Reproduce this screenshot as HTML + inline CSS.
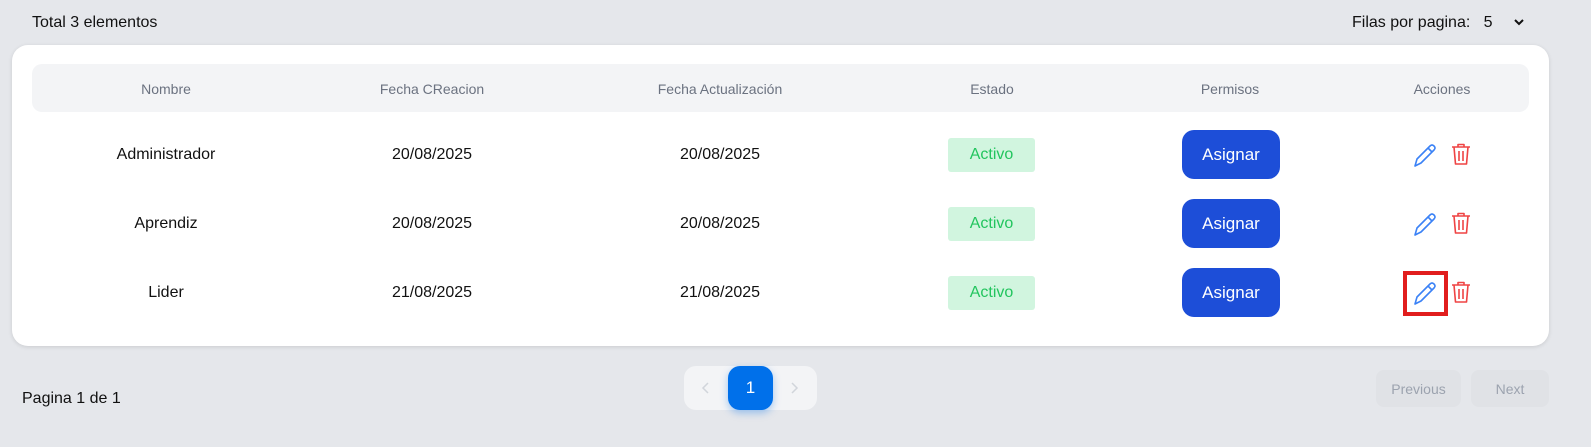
<!DOCTYPE html>
<html><head><style>
body{margin:0;width:1591px;height:447px;background:#e5e7eb;font-family:"Liberation Sans",sans-serif;position:relative;overflow:hidden;color:#111}
.a{position:absolute}
.card{left:12px;top:45px;width:1537px;height:301px;background:#fff;border-radius:16px;box-shadow:0 1px 4px rgba(0,0,0,.12)}
.hdr{left:32px;top:64px;width:1497px;height:48px;background:#f3f4f6;border-radius:10px}
.c{position:absolute;transform:translateX(-50%);white-space:nowrap}
.h{font-size:14px;color:#6b7280;top:81px}
.t{font-size:16px}
.badge{width:87px;height:34px;background:#d1f5df;color:#22c55e;font-size:16px;display:flex;align-items:center;justify-content:center;border-radius:3px}
.btn{width:98px;height:49px;background:#1d4ed8;color:#fff;font-size:17px;display:flex;align-items:center;justify-content:center;border-radius:12px}
</style></head><body>
<div class="a" style="left:32px;top:14px;font-size:16px">Total 3 elementos</div>
<div class="a" style="left:1352px;top:14px;font-size:16px">Filas por pagina:&nbsp;&nbsp; 5</div>
<svg class="a" style="left:1513px;top:16px" width="12" height="12" viewBox="0 0 12 12"><path d="M2 4l4 4 4-4" stroke="#111" stroke-width="2" fill="none"/></svg>
<div class="a card"></div>
<div class="a hdr"></div>
<div class="c h" style="left:166px">Nombre</div>
<div class="c h" style="left:432px">Fecha CReacion</div>
<div class="c h" style="left:720px">Fecha Actualización</div>
<div class="c h" style="left:992px">Estado</div>
<div class="c h" style="left:1230px">Permisos</div>
<div class="c h" style="left:1442px">Acciones</div>

<div class="c t" style="left:166px;top:146px">Administrador</div>
<div class="c t" style="left:432px;top:146px">20/08/2025</div>
<div class="c t" style="left:720px;top:146px">20/08/2025</div>
<div class="a badge" style="left:948px;top:138px">Activo</div>
<div class="a btn" style="left:1182px;top:130px">Asignar</div>

<div class="c t" style="left:166px;top:215px">Aprendiz</div>
<div class="c t" style="left:432px;top:215px">20/08/2025</div>
<div class="c t" style="left:720px;top:215px">20/08/2025</div>
<div class="a badge" style="left:948px;top:207px">Activo</div>
<div class="a btn" style="left:1182px;top:199px">Asignar</div>

<div class="c t" style="left:166px;top:284px">Lider</div>
<div class="c t" style="left:432px;top:284px">21/08/2025</div>
<div class="c t" style="left:720px;top:284px">21/08/2025</div>
<div class="a badge" style="left:948px;top:276px">Activo</div>
<div class="a btn" style="left:1182px;top:268px">Asignar</div>

<svg class="a" style="left:0;top:0" width="1591" height="447">
<defs>
<g id="p"><path d="M0 22 L2 15 L15 2 Q17 0 19 2 Q21 4 19 6 L6 19 Z M13 4 L17 8" stroke="#3b82f6" stroke-width="1.6" fill="none" stroke-linejoin="round"/></g>
<g id="d"><path d="M1 4h18 M7 4V1.5h6V4 M3 4l1.5 17h11L17 4 M8 8v10 M12 8v10" stroke="#ef4444" stroke-width="1.6" fill="none" stroke-linejoin="round"/></g>
</defs>
<use href="#p" x="1415" y="144"/><use href="#d" x="1451" y="143"/>
<use href="#p" x="1415" y="213"/><use href="#d" x="1451" y="212"/>
<use href="#p" x="1415" y="282"/><use href="#d" x="1451" y="281"/>
<rect x="1405" y="273" width="41" height="41" fill="none" stroke="#e11d1d" stroke-width="4"/>
</svg>

<div class="a" style="left:22px;top:390px;font-size:16px">Pagina 1 de 1</div>
<div class="a" style="left:684px;top:366px;width:133px;height:44px;background:#f3f4f6;border-radius:12px"></div>
<svg class="a" style="left:700px;top:381px" width="12" height="14"><path d="M8 2L3 7l5 5" stroke="#d1d5db" stroke-width="1.5" fill="none"/></svg>
<svg class="a" style="left:788px;top:381px" width="12" height="14"><path d="M4 2l5 5-5 5" stroke="#d1d5db" stroke-width="1.5" fill="none"/></svg>
<div class="a" style="left:728px;top:366px;width:45px;height:44px;background:#0070ea;border-radius:12px;color:#fff;font-size:17px;display:flex;align-items:center;justify-content:center;box-shadow:0 3px 8px rgba(0,112,234,.35)">1</div>
<div class="a" style="left:1376px;top:370px;width:85px;height:37px;background:#e0e2e6;border-radius:8px;color:#9ca3af;font-size:14px;display:flex;align-items:center;justify-content:center">Previous</div>
<div class="a" style="left:1471px;top:370px;width:78px;height:37px;background:#e0e2e6;border-radius:8px;color:#9ca3af;font-size:14px;display:flex;align-items:center;justify-content:center">Next</div>
</body></html>
